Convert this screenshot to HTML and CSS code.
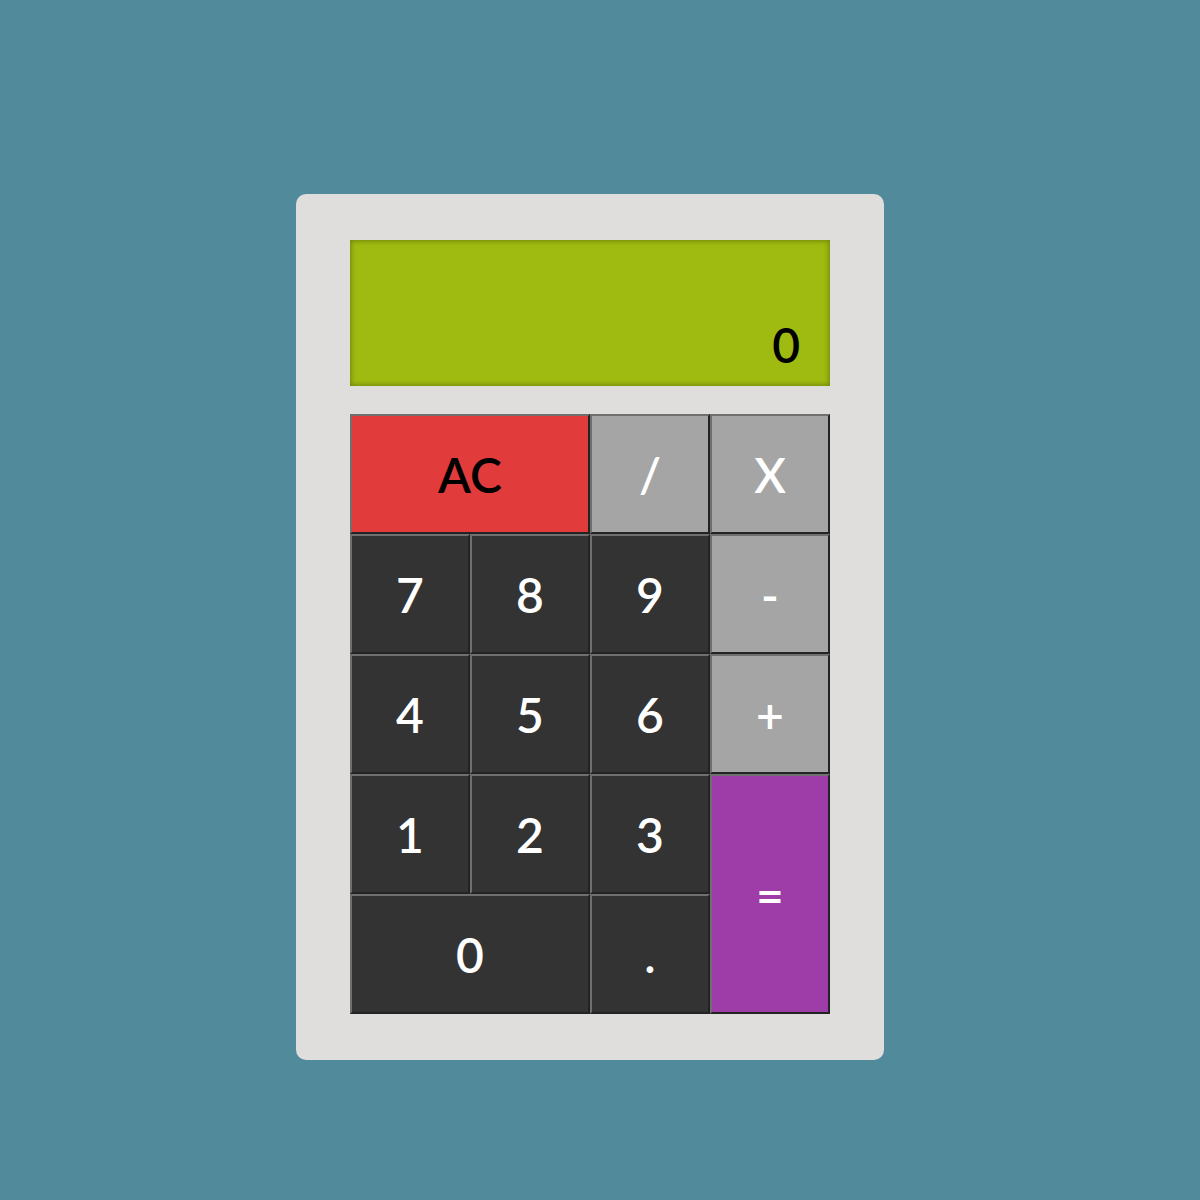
FILE: index.html
```html
<!DOCTYPE html>
<html>
<head>
<meta charset="utf-8">
<link rel="stylesheet" href="styles.css">
</head>
<body>
<div class="calc">
  <div class="display"><span class="value">0</span></div>
  <div class="keys">
    <button class="key clear wide">AC</button>
    <button class="key op">/</button>
    <button class="key op">X</button>
    <button class="key num">7</button>
    <button class="key num">8</button>
    <button class="key num">9</button>
    <button class="key op">-</button>
    <button class="key num">4</button>
    <button class="key num">5</button>
    <button class="key num">6</button>
    <button class="key op">+</button>
    <button class="key num">1</button>
    <button class="key num">2</button>
    <button class="key num">3</button>
    <button class="key equals tall">=</button>
    <button class="key num wide">0</button>
    <button class="key num">.</button>
  </div>
</div>
</body>
</html>
```
FILE: styles.css
```css
html, body {
  margin: 0;
  padding: 0;
}
body {
  background: #518a9b;
  width: 1200px;
  height: 1200px;
  font-family: Lato, "Open Sans", sans-serif;
}
.calc {
  position: relative;
  margin: 194px 0 0 296px;
  width: 588px;
  height: 866px;
  box-sizing: border-box;
  padding: 46px 54px;
  background: #dfdedc;
  border-radius: 10px;
  display: flex;
  flex-direction: column;
  gap: 28px;
}
.display {
  height: 146px;
  background: #9fba10;
  box-shadow: inset 0 0 5px 1px #6b850b;
  display: flex;
  justify-content: flex-end;
  align-items: flex-end;
  padding: 0 30px 17px 0;
  box-sizing: border-box;
}
.value {
  font-size: 48px;
  line-height: 48px;
  font-weight: 600;
  color: #000;
}
.keys {
  display: grid;
  grid-template-columns: repeat(4, 120px);
  grid-template-rows: repeat(5, 120px);
}
.key {
  margin: 0;
  padding: 0;
  font-family: Lato, "Open Sans", sans-serif;
  font-size: 48px;
  font-weight: 600;
  color: #fff;
  border-width: 2px;
  border-style: solid;
  border-color: #6f6f6f #232323 #232323 #6f6f6f;
  box-sizing: border-box;
}
.num {
  background: #333333;
}
.op {
  background: #a5a5a5;
}
.clear {
  background: #e23b3b;
  color: #000;
}
.equals {
  background: #9e3ca8;
}
.wide {
  grid-column: span 2;
}
.tall {
  grid-row: span 2;
}
```
